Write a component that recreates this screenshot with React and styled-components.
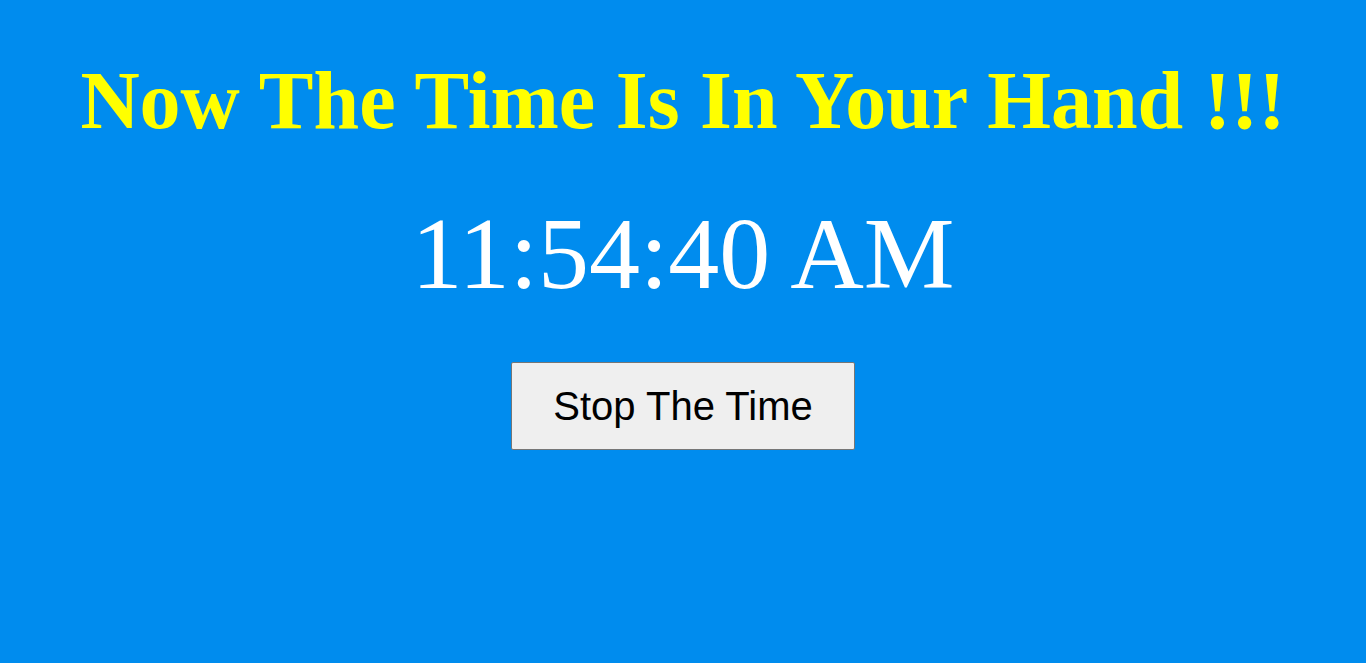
import React, { useState } from 'react';
import styled, { createGlobalStyle } from 'styled-components';

const Global = createGlobalStyle`
  html, body {
    margin: 0;
    padding: 0;
    background-color: #008cee;
  }
`;

const Page = styled.div`
  display: flex;
  flex-direction: column;
  align-items: center;
  min-height: 663px;
  background-color: #008cee;
  padding-top: 53px;
  box-sizing: border-box;
`;

const Title = styled.h1`
  margin: 0;
  font-family: "Liberation Serif", "Times New Roman", serif;
  font-weight: bold;
  font-size: 82px;
  line-height: 96px;
  color: #ffff00;
`;

const Clock = styled.div`
  margin-top: 50px;
  font-family: "Liberation Serif", "Times New Roman", serif;
  font-size: 102px;
  line-height: 110px;
  color: #fff;
`;

const StopBtn = styled.button`
  margin-top: 53px;
  width: 344px;
  height: 88px;
  background-color: #efefef;
  border: 1px solid #767676;
  border-radius: 2px;
  font-family: "Liberation Sans", Arial, sans-serif;
  font-size: 40px;
  color: #000;
  cursor: pointer;
`;

export default function App() {
  const [time] = useState('11:54:40 AM');
  return (
    <Page>
      <Global />
      <Title>Now The Time Is In Your Hand !!!</Title>
      <Clock>{time}</Clock>
      <StopBtn>Stop The Time</StopBtn>
    </Page>
  );
}
